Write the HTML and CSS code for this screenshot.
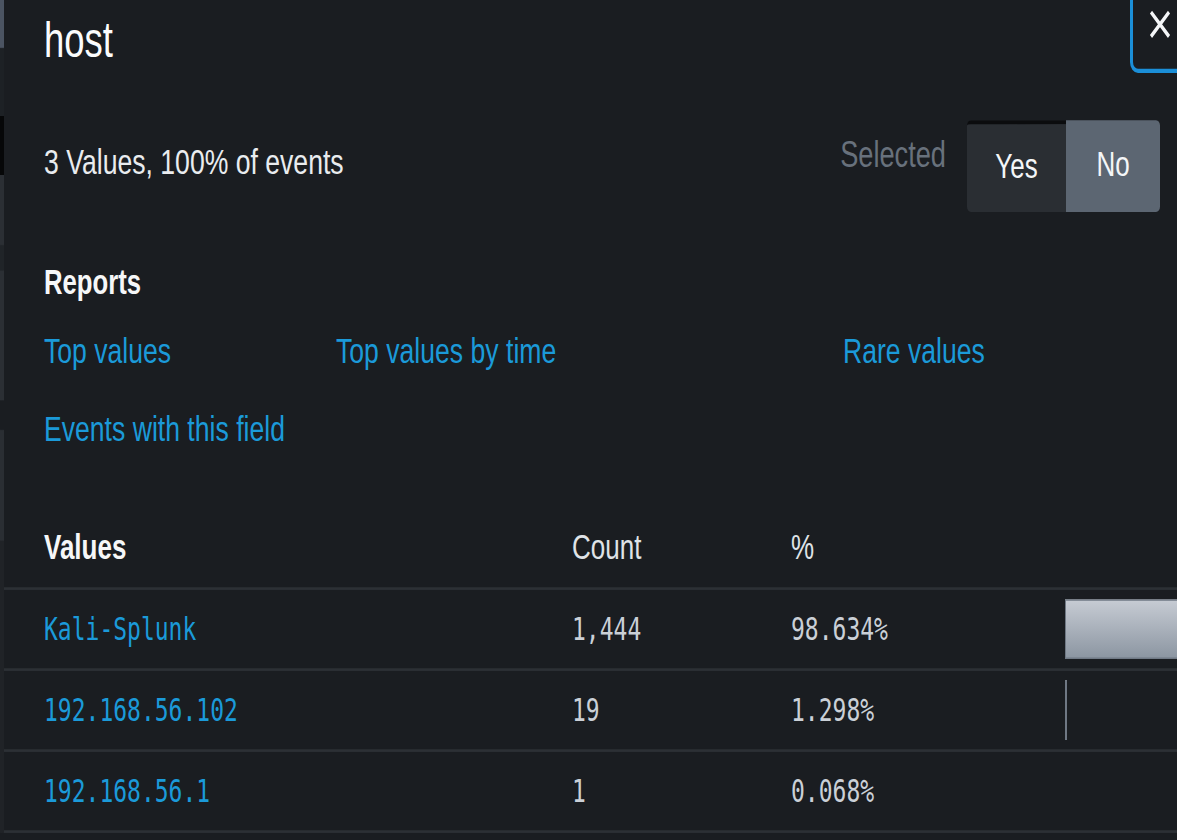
FILE: index.html
```html
<!DOCTYPE html>
<html>
<head>
  <title>host</title>
<link rel="stylesheet" href="styles.css">
</head>
<body>
  <div class="wrap">
    <div class="edge"></div>
    <div class="panel">
      <div class="head">
        <h1>host</h1>
        <button class="close">
          <svg width="22" height="22" viewBox="0 0 22 22"><path d="M2 2 L20 20 M20 2 L2 20" stroke="#f4f6f8" stroke-width="3" fill="none"/></svg>
        </button>
      </div>
      <div class="summary">
        <span class="count_info">3 Values, 100% of events</span>
        <span class="sel_label">Selected</span>
        <div class="toggle">
          <button class="yes">Yes</button>
          <button class="no">No</button>
        </div>
      </div>
      <h3>Reports</h3>
      <div class="reports">
        <a href="#">Top values</a>
        <a href="#">Top values by time</a>
        <a href="#">Rare values</a>
        <a href="#">Events with this field</a>
      </div>
      <table class="vals">
        <colgroup>
          <col class="c_val">
          <col class="c_cnt">
          <col class="c_pct">
          <col class="c_bar">
        </colgroup>
        <thead>
          <tr>
            <th class="first">Values</th>
            <th class="plain">Count</th>
            <th class="plain">%</th>
            <th></th>
          </tr>
        </thead>
        <tbody>
          <tr>
            <td class="first"><a href="#">Kali-Splunk</a></td>
            <td>1,444</td>
            <td>98.634%</td>
            <td><div class="bar" style="width: 98.634%"></div></td>
          </tr>
          <tr>
            <td class="first"><a href="#">192.168.56.102</a></td>
            <td>19</td>
            <td>1.298%</td>
            <td><div class="bar" style="width: 1.298%"></div></td>
          </tr>
          <tr>
            <td class="first"><a href="#">192.168.56.1</a></td>
            <td>1</td>
            <td>0.068%</td>
            <td><div class="bar" style="width: 0.068%"></div></td>
          </tr>
        </tbody>
      </table>
    </div>
  </div>
</body>
</html>
```

FILE: styles.css
```css
html, body {
  margin: 0;
  height: 100%;
  overflow: hidden;
}
body {
  background-color: #1a1d21;
  font-family: "Liberation Sans", Arial, sans-serif;
  color: #f2f4f6;
}
.wrap {
  display: flex;
  width: 1177px;
  transform: scaleY(1.35);
  transform-origin: 0 0;
}
.edge {
  width: 4px;
  flex: none;
  background: linear-gradient(#4b5462 0, #4b5462 35px, #1d2125 36px, #1d2125 86px, #060708 86px, #060708 130px,
    #2b2f34 130px, #2b2f34 181px, #202428 182px, #202428 200px, #2b2f34 201px, #2b2f34 296px,
    #1a1d21 297px, #1a1d21 318px, #2a2e33 319px, #2a2e33 400px, #202327 401px);
}
.panel {
  flex: 1;
  min-width: 0;
  padding: 0 17px 0 40px;
}
.head {
  display: flex;
  align-items: flex-start;
  height: 60px;
}
h1 {
  margin: 0;
  padding-top: 5px;
  font-size: 36.5px;
  line-height: 50px;
  font-weight: normal;
  color: #fbfcfd;
}
.close {
  margin: -10px -30px 0 auto;
  width: 60px;
  height: 64px;
  padding: 14px 0 0 0;
  display: flex;
  justify-content: center;
  align-items: flex-start;
  background: transparent;
  border: 3px solid #1b8fd8;
  border-radius: 8px;
  cursor: pointer;
  flex: none;
}
.summary {
  display: flex;
  align-items: center;
  margin-top: 29px;
  height: 68px;
}
.count_info {
  font-size: 26.6px;
  line-height: 30px;
  margin-bottom: 6px;
  color: #e9ecef;
}
.sel_label {
  margin: 0 21px 16px auto;
  font-size: 27.2px;
  line-height: 30px;
  color: #68717c;
}
.toggle {
  display: flex;
  height: 68px;
}
.toggle button {
  font-family: "Liberation Sans", Arial, sans-serif;
  font-size: 26px;
  line-height: 30px;
  color: #f4f6f8;
  border: 0;
  padding: 0 0 4px 0;
  cursor: pointer;
}
.toggle .yes {
  width: 99px;
  background-color: #2a2e33;
  border-top: 3px solid #0b0c0e;
  border-radius: 4px 0 0 4px;
}
.toggle .no {
  width: 94px;
  background-color: #5c6672;
  border-radius: 0 4px 4px 0;
}
h3 {
  margin: 37px 0 0 0;
  font-size: 25.7px;
  line-height: 30px;
  font-weight: bold;
  color: #f6f7f8;
}
.reports {
  display: grid;
  grid-template-columns: 292px 507px auto;
  row-gap: 27.7px;
  margin-top: 21px;
}
.reports a, .vals a {
  color: #1b9ad9;
  text-decoration: none;
}
.reports a {
  font-size: 26.6px;
  line-height: 30px;
}
.vals {
  margin: 57px 0 0 -40px;
  width: 1211px;
  table-layout: fixed;
  border-collapse: separate;
  border-spacing: 0;
}
.c_val { width: 568px; }
.c_cnt { width: 219px; }
.c_pct { width: 274px; }
.c_bar { width: 150px; }
.vals th {
  text-align: left;
  font-size: 26px;
  line-height: 30px;
  padding: 0 0 15.5px 0;
  color: #f6f7f8;
}
.vals th.plain {
  font-weight: normal;
  color: #dfe3e7;
}
.vals .first {
  padding-left: 40px;
}
.vals td {
  height: 30px;
  padding: 14px 0;
  border-top: 2px solid #2c3035;
  vertical-align: middle;
  color: #cad0d7;
  font-family: "DejaVu Sans Mono", "Liberation Mono", monospace;
  font-size: 23px;
  line-height: 30px;
}
.vals tbody tr:last-child td {
  border-bottom: 2px solid #2c3035;
}
.bar {
  height: 44px;
  margin: -7px 0;
  background: linear-gradient(#c7ccd4, #8b95a1);
  box-shadow: inset 0 0 0 1px #6f7884;
}
```
